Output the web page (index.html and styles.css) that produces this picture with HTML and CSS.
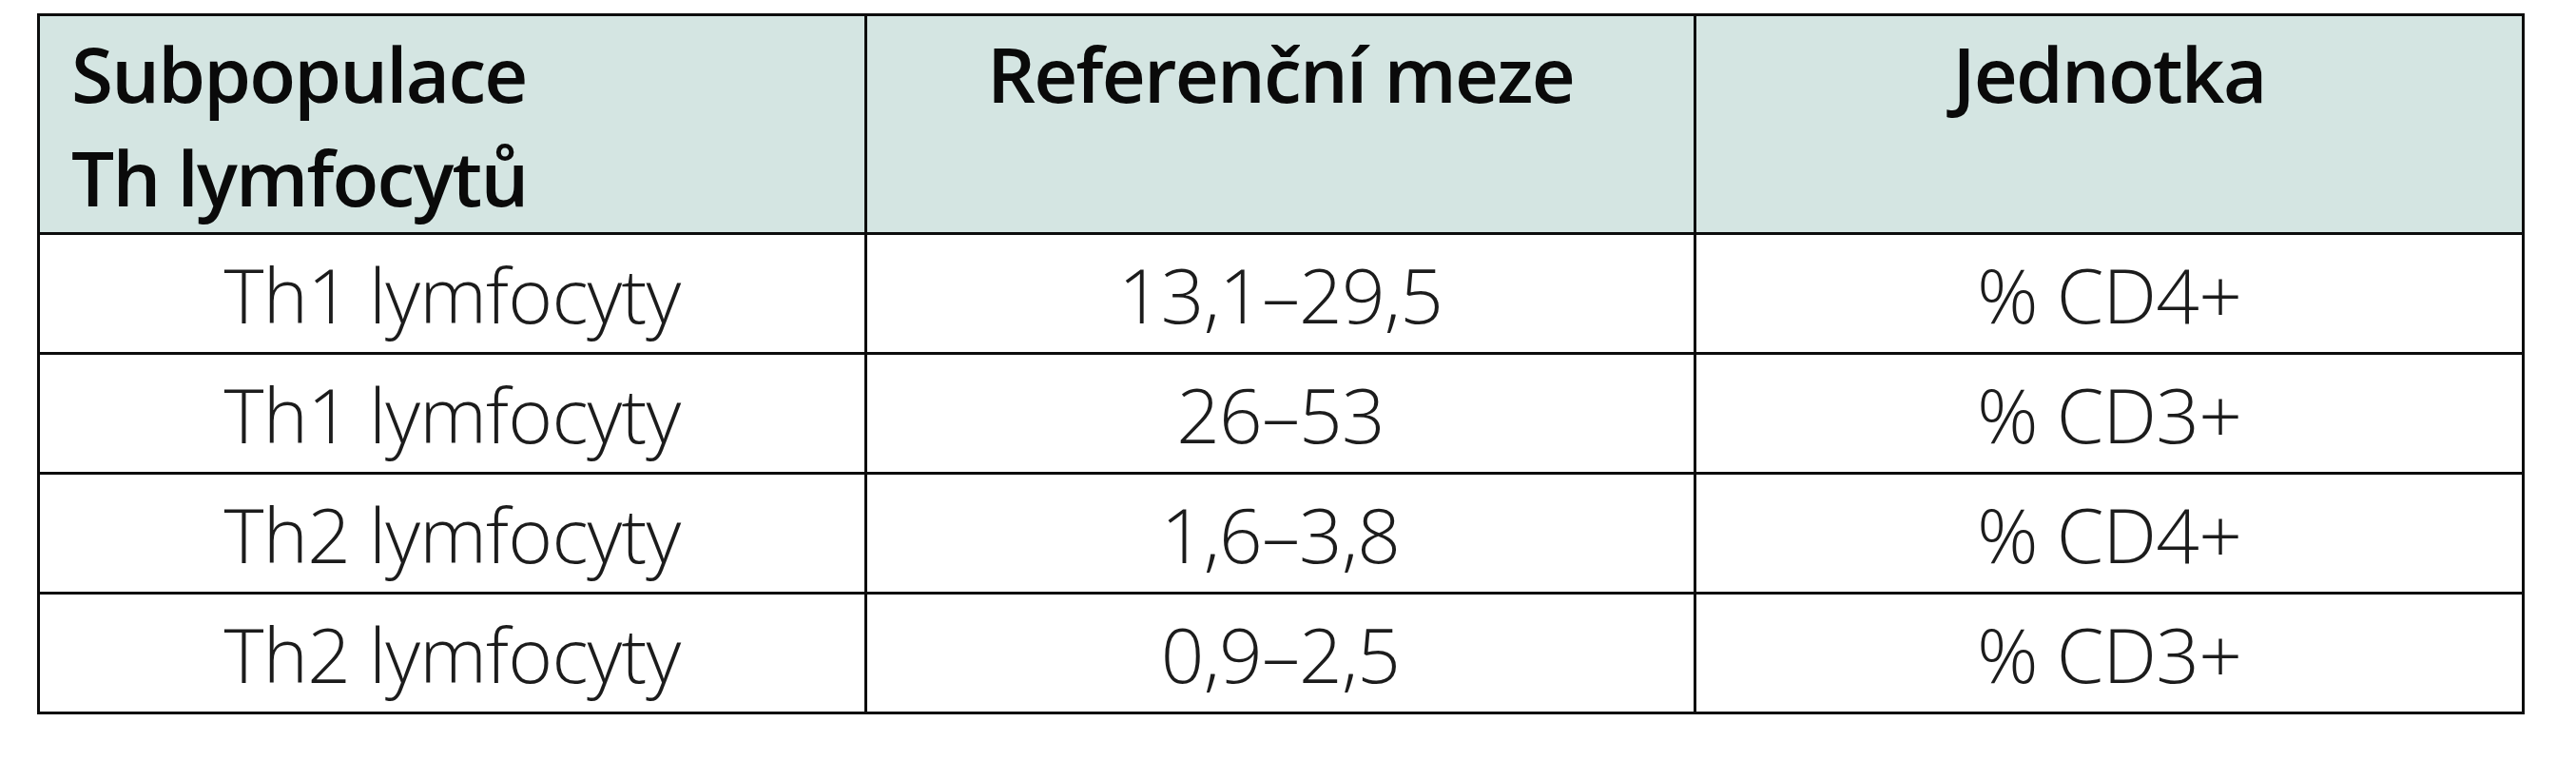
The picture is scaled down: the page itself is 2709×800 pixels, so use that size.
FILE: index.html
```html
<!DOCTYPE html>
<html lang="cs">
<head>
<meta charset="utf-8">
<title>Subpopulace Th lymfocytů</title>
<link rel="stylesheet" href="styles.css">
</head>
<body>
<table class="ref-table">
  <colgroup>
    <col class="col-a">
    <col class="col-b">
    <col class="col-c">
  </colgroup>
  <thead>
    <tr class="head-row">
      <th class="head-cell head-left">Subpopulace<br>Th lymfocytů</th>
      <th class="head-cell">Referenční meze</th>
      <th class="head-cell">Jednotka</th>
    </tr>
  </thead>
  <tbody>
    <tr class="body-row">
      <td class="body-cell">Th1 lymfocyty</td>
      <td class="body-cell">13,1–29,5</td>
      <td class="body-cell">% CD4+</td>
    </tr>
    <tr class="body-row">
      <td class="body-cell">Th1 lymfocyty</td>
      <td class="body-cell">26–53</td>
      <td class="body-cell">% CD3+</td>
    </tr>
    <tr class="body-row">
      <td class="body-cell">Th2 lymfocyty</td>
      <td class="body-cell">1,6–3,8</td>
      <td class="body-cell">% CD4+</td>
    </tr>
    <tr class="body-row">
      <td class="body-cell">Th2 lymfocyty</td>
      <td class="body-cell">0,9–2,5</td>
      <td class="body-cell">% CD3+</td>
    </tr>
  </tbody>
</table>
</body>
</html>
```
FILE: styles.css
```css
html, body {
  margin: 0;
  padding: 0;
  background: #ffffff;
}

body {
  font-family: "Open Sans", "Noto Sans", "Liberation Sans", sans-serif;
  color: #111;
}

.ref-table {
  margin: 14px 0 0 39px;
  width: 2616px;
  table-layout: fixed;
  border-collapse: separate;
  border-spacing: 0;
  border-top: 3px solid #0d0d0d;
  border-left: 3px solid #0d0d0d;
}

.col-a { width: 870px; }
.col-b { width: 872px; }
.col-c { width: 871px; }

.head-cell,
.body-cell {
  border-right: 3px solid #0d0d0d;
  border-bottom: 3px solid #0d0d0d;
  font-size: 80px;
  line-height: 109px;
}

.head-cell {
  background: #d4e5e2;
  font-weight: 600;
  color: #0a0a0a;
  letter-spacing: -1.8px;
  text-align: center;
  vertical-align: top;
  padding: 5px 0 4px 0;
  height: 218px;
}

.head-left {
  text-align: left;
  padding-left: 33px;
}

.body-cell {
  font-weight: 300;
  color: #1c1c1c;
  letter-spacing: -0.8px;
  text-align: center;
  vertical-align: middle;
  padding: 7px 0;
  height: 109px;
}
```
